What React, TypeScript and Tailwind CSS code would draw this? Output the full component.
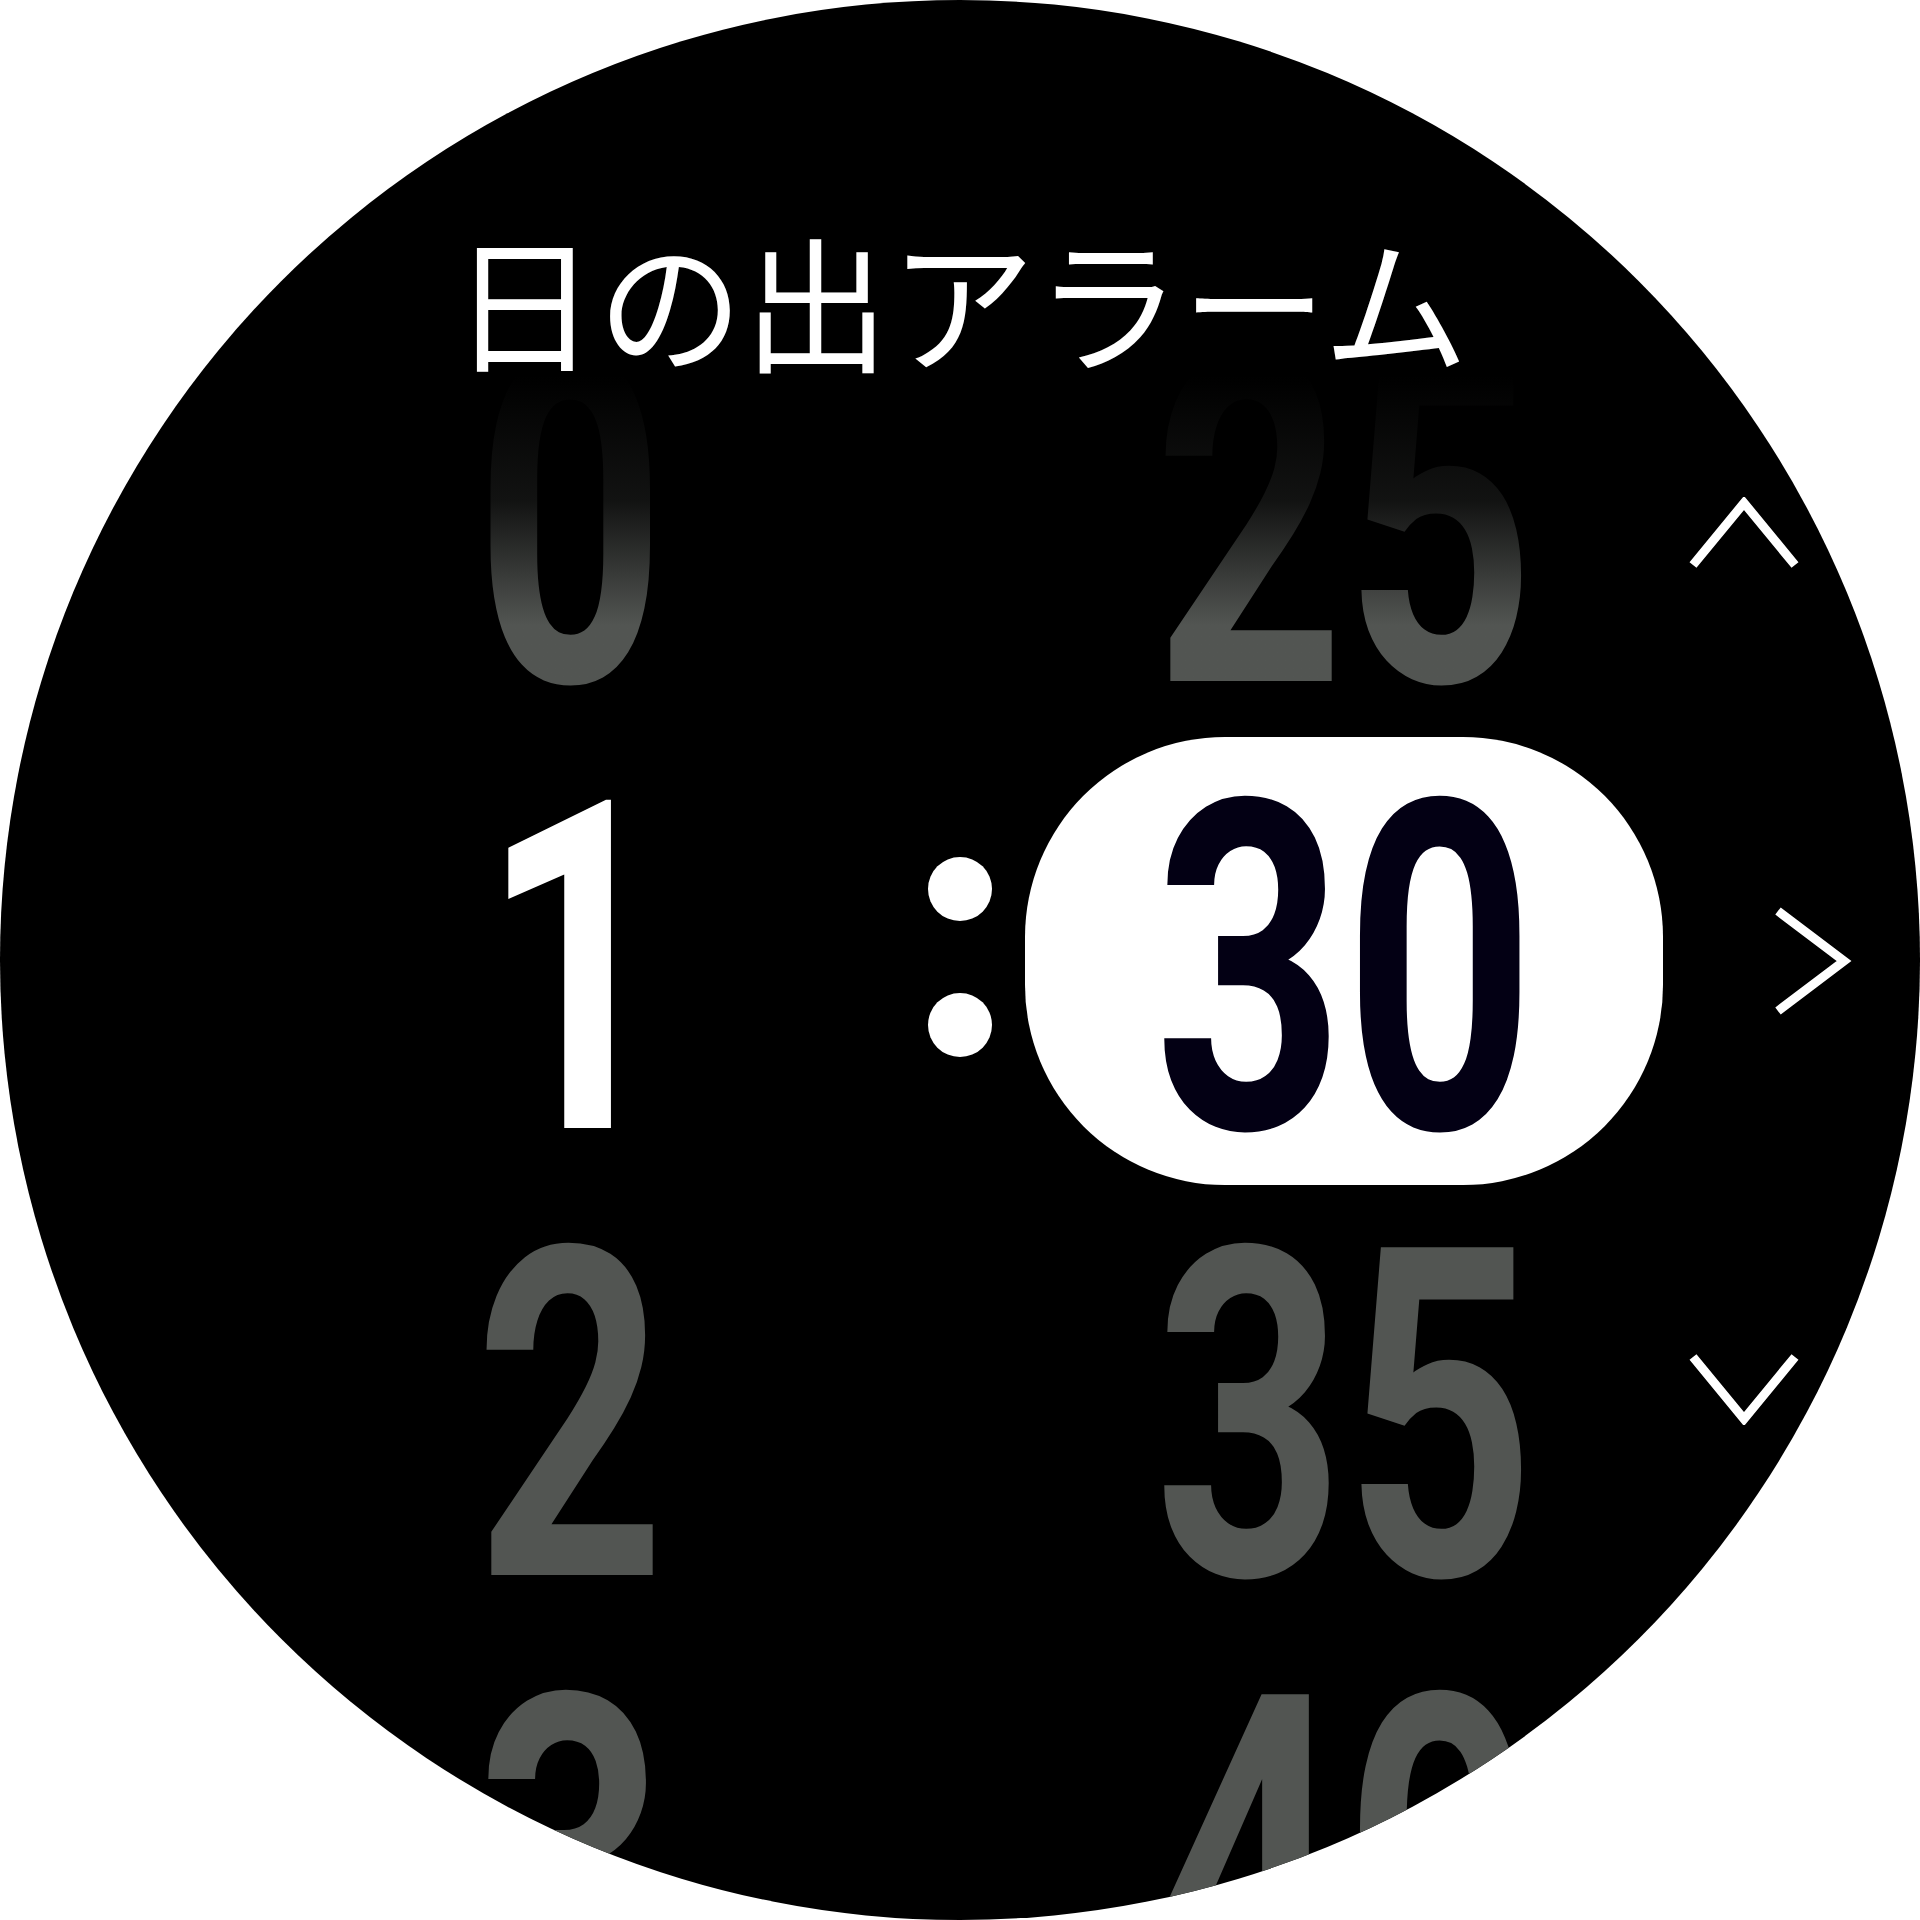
import React from 'react'

type Dir = 'up' | 'right' | 'down'

function Chevron({ dir }: { dir: Dir }) {
  if (dir === 'right') {
    return (
      <svg width="80" height="112" viewBox="0 0 80 112" className="ml-[109px] -mt-[20px] shrink-0">
        <polyline points="6,6 72,56 6,106" fill="none" stroke="#fff" strokeWidth="9" />
      </svg>
    )
  }
  if (dir === 'up') {
    return (
      <svg width="112" height="72" viewBox="0 0 112 72" className="ml-[25px] mt-[18px] shrink-0">
        <polyline points="5,68 56,6 107,68" fill="none" stroke="#fff" strokeWidth="9" />
      </svg>
    )
  }
  return (
    <svg width="112" height="72" viewBox="0 0 112 72" className="ml-[25px] -mt-[58px] shrink-0">
      <polyline points="5,4 56,66 107,4" fill="none" stroke="#fff" strokeWidth="9" />
    </svg>
  )
}

function Num({ value, className }: { value: string; className: string }) {
  return (
    <span
      className={`inline-block scale-x-[0.72] font-['Roboto','Liberation_Sans',sans-serif] font-bold text-[461px] leading-none ${className}`}
    >
      {value}
    </span>
  )
}

// top row fades out towards the title
const faded =
  'bg-linear-to-b from-transparent from-[18%] via-[#52555238] via-[45%] to-[#525552] to-[72%] bg-clip-text text-transparent'

interface RowProps {
  hour: string
  minute: string
  kind: 'faded' | 'active' | 'plain'
  chevron?: Dir
}

function Row({ hour, minute, kind, chevron }: RowProps) {
  const tone = kind === 'faded' ? faded : 'text-[#525552]'
  return (
    <div className="flex h-[447px] shrink-0 items-center">
      <div className="ml-[420px] flex w-[300px] shrink-0 justify-center">
        <Num value={hour} className={kind === 'active' ? '-ml-[56px] translate-x-[34px] text-white' : tone} />
      </div>

      <div className="ml-[176px] flex w-[128px] shrink-0 flex-col items-center gap-[72px]">
        {kind === 'active' && (
          <>
            <div className="-mt-[28px] h-[64px] w-[64px] rounded-full bg-white" />
            <div className="h-[64px] w-[64px] rounded-full bg-white" />
          </>
        )}
      </div>

      <div className="ml-[1px] flex w-[638px] shrink-0 justify-center">
        {kind === 'active' ? (
          <div className="-mt-[20px] flex h-[448px] w-[638px] items-center justify-center rounded-[200px] bg-white pt-[20px]">
            <Num value={minute} className="text-[#030014]" />
          </div>
        ) : (
          <Num value={minute} className={tone} />
        )}
      </div>

      <div className="flex w-[257px] shrink-0 items-center">
        {chevron && <Chevron dir={chevron} />}
      </div>
    </div>
  )
}

export default function App() {
  return (
    <div className="h-[1920px] w-[1920px] bg-white">
      <div className="flex h-full w-full flex-col overflow-hidden rounded-full bg-black">
        {/* Title */}
        <h1 className="relative z-10 shrink-0 pt-[225px] text-center font-['Noto_Sans_CJK_JP','Noto_Sans',sans-serif] text-[146px] font-normal leading-none text-white">
          日の出アラーム
        </h1>

        {/* Time picker */}
        <div className="-mt-[71px] flex shrink-0 flex-col">
          <Row hour="0" minute="25" kind="faded" chevron="up" />
          <Row hour="1" minute="30" kind="active" chevron="right" />
          <Row hour="2" minute="35" kind="plain" chevron="down" />
          <Row hour="3" minute="40" kind="plain" />
        </div>
      </div>
    </div>
  )
}
